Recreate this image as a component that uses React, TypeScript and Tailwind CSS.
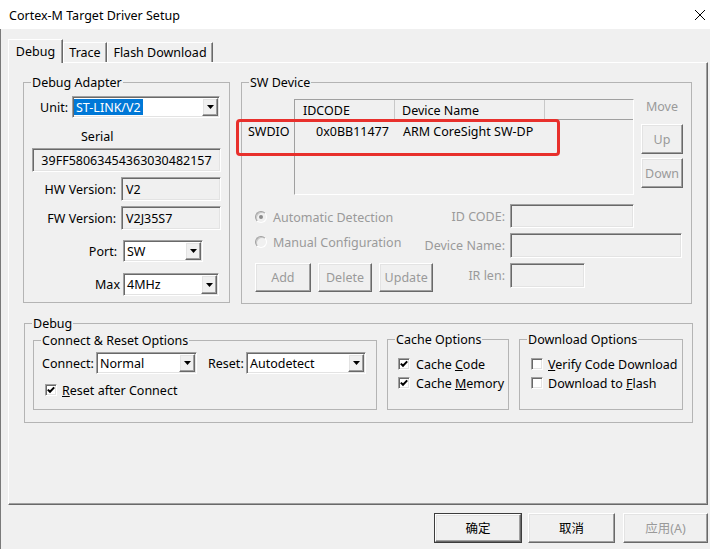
import React from "react";

const sunkenWhite =
  "bg-white border border-t-[#a0a0a0] border-l-[#a0a0a0] border-r-white border-b-white shadow-[inset_1px_1px_0_#696969,inset_-1px_-1px_0_#e3e3e3]";
const sunkenGray =
  "bg-[#f0f0f0] border border-t-[#a0a0a0] border-l-[#a0a0a0] border-r-white border-b-white shadow-[inset_1px_1px_0_#696969,inset_-1px_-1px_0_#e3e3e3]";
const raised =
  "bg-[#f0f0f0] border border-t-white border-l-white border-r-[#696969] border-b-[#696969] shadow-[inset_-1px_-1px_0_#a0a0a0,inset_1px_1px_0_#e3e3e3]";

function Arrow() {
  return (
    <div className={`w-[16px] flex items-center justify-center ${raised}`}>
      <svg width="7" height="4" viewBox="0 0 7 4">
        <polygon points="0,0 7,0 3.5,4" fill="black" />
      </svg>
    </div>
  );
}

function Combo({ className, value, selected }: { className: string; value: string; selected?: boolean }) {
  return (
    <div className={`${className} flex items-stretch p-[1px] ${sunkenWhite}`}>
      <div className="flex-1 flex items-stretch overflow-hidden whitespace-nowrap">
        {selected ? (
          <span className="flex items-center pt-[2px] bg-[#0078d7] text-white px-[2px] my-[1px]">{value}</span>
        ) : (
          <span className="flex items-center pt-[2px] pl-[2px]">{value}</span>
        )}
      </div>
      <Arrow />
    </div>
  );
}

function Group({ label, className, children }: { label: string; className: string; children?: React.ReactNode }) {
  return (
    <div className={`relative border border-[#b4b4b4] ${className}`}>
      <span className="absolute left-[7px] top-[-8px] bg-[#f0f0f0] px-[1px] leading-[16px] whitespace-nowrap">{label}</span>
      {children}
    </div>
  );
}

function Check({ checked }: { checked: boolean }) {
  return (
    <span className="w-[12px] h-[12px] flex items-center justify-center bg-white border border-t-[#a0a0a0] border-l-[#a0a0a0] border-r-white border-b-white shadow-[inset_1px_1px_0_#696969,inset_-1px_-1px_0_#e3e3e3]">
      {checked && (
        <svg width="8" height="8" viewBox="0 0 8 8">
          <path d="M0.8 3.6 L3 5.8 L7.2 1.4" stroke="black" strokeWidth="2" fill="none" />
        </svg>
      )}
    </span>
  );
}

function Radio({ checked }: { checked: boolean }) {
  return (
    <span className="w-[12px] h-[12px] rounded-full flex items-center justify-center bg-[#f0f0f0] border border-t-[#a0a0a0] border-l-[#a0a0a0] border-r-white border-b-white shadow-[inset_1px_1px_0_#c8c8c8]">
      {checked && <span className="w-[4px] h-[4px] rounded-full bg-[#8c8c8c]" />}
    </span>
  );
}

export default function App() {
  return (
    <div className="w-[710px] h-[549px] bg-[#f0f0f0] flex flex-col overflow-hidden text-[12.5px] text-black font-['Noto_Sans','Noto_Sans_CJK_SC',sans-serif]">
      {/* Title bar */}
      <div className="h-[29px] bg-white flex items-center justify-between pl-[9px] pr-[5px] shrink-0">
        <span className="text-[12.5px] leading-[16px] mt-[2px]">Cortex-M Target Driver Setup</span>
        <svg width="10" height="10" viewBox="0 0 10 10">
          <path d="M0 0 L10 10 M10 0 L0 10" stroke="black" strokeWidth="1" />
        </svg>
      </div>

      <div className="flex-1 flex flex-col border-l border-[#7a7a7a] pl-[7px]">
        {/* Tabs */}
        <div className="mt-[10px] h-[23px] flex items-end">
          <div className="relative z-10 mb-[-1px] w-[55px] h-[24px] flex items-center justify-center pt-[1px] bg-[#f0f0f0] border-t border-l border-white border-r border-r-[#696969] shadow-[inset_-1px_0_0_#a0a0a0]">
            Debug
          </div>
          <div className="w-[44px] h-[20px] flex items-center justify-center pt-[1px] border-t border-l border-white border-r border-r-[#696969] shadow-[inset_-1px_0_0_#a0a0a0]">
            Trace
          </div>
          <div className="w-[106px] h-[20px] flex items-center justify-center pt-[1px] border-t border-l border-white border-r border-r-[#696969] shadow-[inset_-1px_0_0_#a0a0a0]">
            Flash Download
          </div>
        </div>

        {/* Tab page */}
        <div className="w-[700px] h-[443px] border border-t-white border-l-white border-r-[#696969] border-b-[#696969] shadow-[inset_-1px_-1px_0_#a0a0a0] flex flex-col">
          <div className="mt-[19px] flex items-start">
            {/* Debug Adapter */}
            <Group label="Debug Adapter" className="ml-[14px] w-[207px] h-[221px] flex flex-col">
              <div className="mt-[13px] h-[22px] flex items-center">
                <span className="w-[44px] text-right pt-[2px]">Unit:</span>
                <Combo className="ml-[4px] w-[148px] h-[22px]" value="ST-LINK/V2" selected />
              </div>
              <div className="mt-[10px] h-[16px] leading-[16px] pl-[57px] pt-[1px]">Serial</div>
              <div className={`mt-[4px] ml-[8px] w-[189px] h-[24px] flex items-center justify-center pt-[2px] ${sunkenGray}`}>
                39FF58063454363030482157
              </div>
              <div className="mt-[5px] h-[24px] flex items-center">
                <span className="w-[92px] text-right pt-[2px]">HW Version:</span>
                <div className={`ml-[5px] w-[100px] h-[24px] flex items-center pl-[4px] pt-[2px] ${sunkenGray}`}>V2</div>
              </div>
              <div className="mt-[5px] h-[24px] flex items-center">
                <span className="w-[92px] text-right pt-[2px]">FW Version:</span>
                <div className={`ml-[5px] w-[100px] h-[24px] flex items-center pl-[4px] pt-[2px] ${sunkenGray}`}>V2J35S7</div>
              </div>
              <div className="mt-[10px] h-[22px] flex items-center">
                <span className="w-[93px] text-right pt-[2px]">Port:</span>
                <Combo className="ml-[6px] w-[80px] h-[22px]" value="SW" />
              </div>
              <div className="mt-[11px] h-[23px] flex items-center">
                <span className="w-[96px] text-right pt-[2px]">Max</span>
                <Combo className="ml-[3px] w-[96px] h-[23px]" value="4MHz" />
              </div>
            </Group>

            {/* SW Device */}
            <Group label="SW Device" className="ml-[11px] w-[451px] h-[222px] flex flex-col">
              <div className="mt-[16px] flex items-start">
                <div className="w-[52px] pt-[21px]">
                  <div className="h-[22px] flex items-center pl-[6px] pt-[2px]">SWDIO</div>
                </div>
                <div className="w-[340px] h-[96px] border border-t-[#a0a0a0] border-l-[#a0a0a0] border-r-white border-b-white flex flex-col">
                  <div className="h-[20px] flex border-b border-[#a0a0a0]">
                    <div className="w-[100px] flex items-center pl-[8px] pt-[3px] border-r border-[#c8c8c8]">IDCODE</div>
                    <div className="w-[150px] flex items-center pl-[7px] pt-[3px] border-r border-[#c8c8c8]">Device Name</div>
                    <div className="flex-1" />
                  </div>
                  <div className="h-[22px] flex items-center pt-[2px]">
                    <div className="w-[100px] pl-[21px]">0x0BB11477</div>
                    <div className="pl-[8px]">ARM CoreSight SW-DP</div>
                  </div>
                </div>
                <div className="ml-[7px] w-[42px] flex flex-col">
                  <div className="h-[16px] leading-[16px] text-center text-[#9a9a9a]">Move</div>
                  <div className={`mt-[9px] h-[30px] flex items-center justify-center pt-[2px] text-[#9a9a9a] ${raised}`}>Up</div>
                  <div className={`mt-[4px] h-[30px] flex items-center justify-center pt-[2px] text-[#9a9a9a] ${raised}`}>Down</div>
                </div>
              </div>

              <div className="mt-[9px] flex items-start">
                <div className="ml-[13px] w-[178px] shrink-0 flex flex-col text-[#9a9a9a]">
                  <div className="mt-[5px] h-[16px] flex items-center">
                    <Radio checked />
                    <span className="ml-[6px] pt-[2px]">Automatic Detection</span>
                  </div>
                  <div className="mt-[9px] h-[16px] flex items-center">
                    <Radio checked={false} />
                    <span className="ml-[6px] pt-[2px]">Manual Configuration</span>
                  </div>
                  <div className="mt-[13px] flex">
                    <div className={`w-[56px] h-[29px] flex items-center justify-center pt-[2px] ${raised}`}>Add</div>
                    <div className={`ml-[7px] w-[55px] h-[29px] flex items-center justify-center pt-[2px] ${raised}`}>Delete</div>
                    <div className={`ml-[7px] w-[54px] h-[29px] flex items-center justify-center pt-[2px] ${raised}`}>Update</div>
                  </div>
                </div>
                <div className="ml-[-20px] flex flex-col text-[#9a9a9a]">
                  <div className="h-[24px] flex items-center">
                    <span className="w-[92px] text-right whitespace-nowrap pt-[2px]">ID CODE:</span>
                    <div className={`ml-[5px] w-[124px] h-[24px] ${sunkenGray}`} />
                  </div>
                  <div className="mt-[5px] h-[25px] flex items-center">
                    <span className="w-[92px] text-right whitespace-nowrap pt-[2px]">Device Name:</span>
                    <div className={`ml-[5px] w-[172px] h-[25px] ${sunkenGray}`} />
                  </div>
                  <div className="mt-[5px] h-[25px] flex items-center">
                    <span className="w-[92px] text-right whitespace-nowrap pt-[2px]">IR len:</span>
                    <div className={`ml-[5px] w-[75px] h-[25px] ${sunkenGray}`} />
                  </div>
                </div>
              </div>

              <div className="absolute left-[-6px] top-[36px] w-[324px] h-[37px] border-[3px] border-[#e8302c] rounded-[4px] pointer-events-none" />
            </Group>
          </div>

          {/* Debug group */}
          <Group label="Debug" className="mt-[19px] ml-[15px] w-[669px] h-[100px] flex items-start">
            <Group label="Connect & Reset Options" className="ml-[8px] mt-[16px] w-[344px] h-[70px] flex flex-col">
              <div className="mt-[11px] h-[22px] flex items-center pl-[8px]">
                <span className="w-[54px] pt-[2px]">Connect:</span>
                <Combo className="w-[101px] h-[22px]" value="Normal" />
                <span className="ml-[11px] w-[38px] pt-[2px]">Reset:</span>
                <Combo className="w-[120px] h-[22px]" value="Autodetect" />
              </div>
              <div className="mt-[8px] h-[16px] flex items-center pl-[11px]">
                <Check checked />
                <span className="ml-[5px] pt-[2px]">
                  <u>R</u>eset after Connect
                </span>
              </div>
            </Group>
            <Group label="Cache Options" className="ml-[10px] mt-[15px] w-[122px] h-[71px] flex flex-col">
              <div className="mt-[16px] h-[16px] flex items-center pl-[10px]">
                <Check checked />
                <span className="ml-[6px] whitespace-nowrap pt-[2px]">
                  Cache <u>C</u>ode
                </span>
              </div>
              <div className="mt-[3px] h-[16px] flex items-center pl-[10px]">
                <Check checked />
                <span className="ml-[6px] whitespace-nowrap pt-[2px]">
                  Cache <u>M</u>emory
                </span>
              </div>
            </Group>
            <Group label="Download Options" className="ml-[10px] mt-[15px] w-[164px] h-[71px] flex flex-col">
              <div className="mt-[16px] h-[16px] flex items-center pl-[11px]">
                <Check checked={false} />
                <span className="ml-[5px] whitespace-nowrap pt-[2px]">
                  <u>V</u>erify Code Download
                </span>
              </div>
              <div className="mt-[3px] h-[16px] flex items-center pl-[11px]">
                <Check checked={false} />
                <span className="ml-[5px] whitespace-nowrap pt-[2px]">
                  Download to <u>F</u>lash
                </span>
              </div>
            </Group>
          </Group>
        </div>

        {/* Bottom buttons */}
        <div className="mt-[8px] flex justify-end pr-[2px]">
          <div className="w-[88px] h-[30px] border border-[#3c3c3c]">
            <div className={`w-full h-full flex items-center justify-center pt-[2px] ${raised}`}>确定</div>
          </div>
          <div className={`ml-[6px] w-[87px] h-[30px] flex items-center justify-center pt-[2px] ${raised}`}>取消</div>
          <div className={`ml-[8px] w-[85px] h-[30px] flex items-center justify-center pt-[2px] text-[#9a9a9a] ${raised}`}>应用(A)</div>
        </div>
      </div>
    </div>
  );
}
